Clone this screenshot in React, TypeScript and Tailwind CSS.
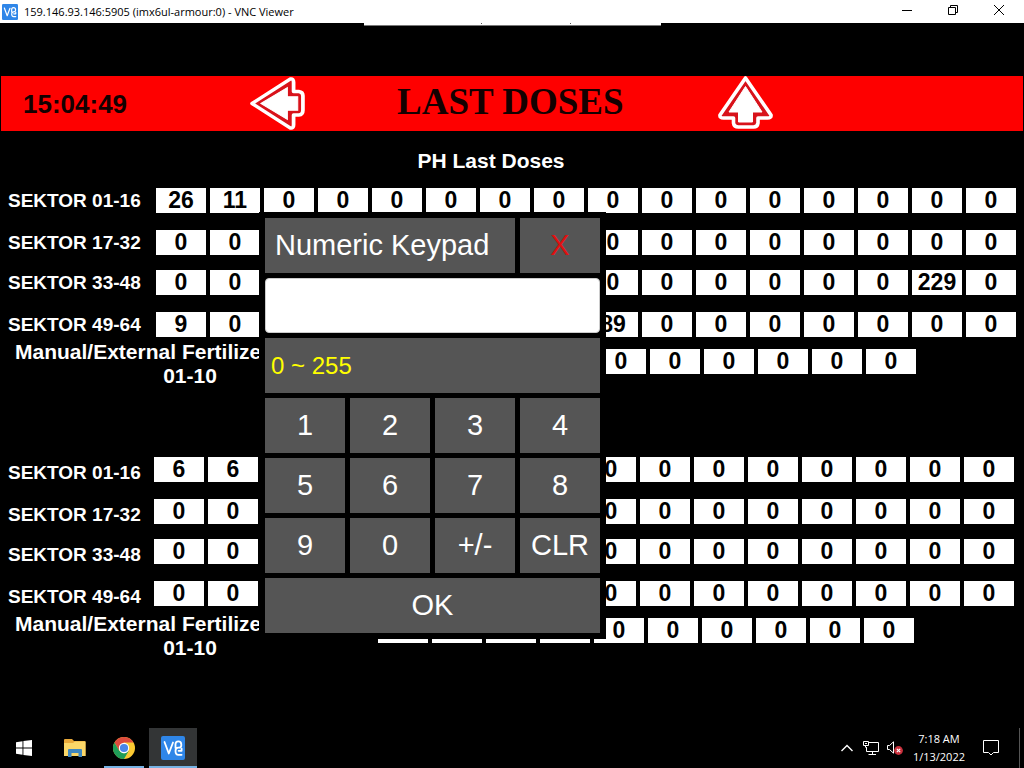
import React from "react";

type Row = { label: string; values: string[] };

const fill = (count: number, overrides: Record<number, string> = {}): string[] =>
  Array.from({ length: count }, (_, i) => overrides[i] ?? "0");

// Columns 3 to 8 carry no reading while the keypad is open over them.
const masked = (overrides: Record<number, string> = {}): string[] =>
  fill(16, { 2: "", 3: "", 4: "", 5: "", 6: "", 7: "", ...overrides });

const phRows: Row[] = [
  { label: "SEKTOR 01-16", values: fill(16, { 0: "26", 1: "11" }) },
  { label: "SEKTOR 17-32", values: masked() },
  { label: "SEKTOR 33-48", values: masked({ 14: "229" }) },
  { label: "SEKTOR 49-64", values: masked({ 0: "9", 8: "89" }) },
];

const lowerRows: Row[] = [
  { label: "SEKTOR 01-16", values: masked({ 0: "6", 1: "6" }) },
  { label: "SEKTOR 17-32", values: masked() },
  { label: "SEKTOR 33-48", values: masked() },
  { label: "SEKTOR 49-64", values: masked() },
];

const manualValues = fill(10, { 0: "", 1: "", 2: "", 3: "" });

function VncLogo({ className }: { className: string }) {
  return (
    <svg viewBox="0 0 24 24" className={className} aria-hidden="true">
      <rect width="24" height="24" rx="2" fill="#2f86e8" />
      <g fill="none" stroke="#fff" strokeWidth="1.8" strokeLinecap="round" strokeLinejoin="round">
        <path d="M3.5 6 L7.8 17.5 L12 6.5" />
        <path d="M14.5 12 V8.2 Q14.5 5.3 17.3 5.3 Q20.3 5.3 20.3 8.4 V9.2 Q20.3 11.7 17.8 11.7 H17 Q14.5 12 14.5 15 Q14.5 18.8 17.4 18.8 H20.6" />
        <path d="M17.6 14.8 H20.6 V12.6" />
      </g>
    </svg>
  );
}

function ArrowIcon({ className }: { className: string }) {
  return (
    <svg viewBox="0 0 55 53" preserveAspectRatio="none" className={className} aria-hidden="true">
      <path
        d="M27.5 2 L53 39 Q53.5 42 49.5 42 H40 V47 Q39.5 51 35.5 51 H20.5 Q16 51 15.5 47 V42 H5.5 Q1.5 42 2 39 Z"
        fill="#d8121a"
        stroke="#fff"
        strokeWidth="3.6"
        strokeLinejoin="round"
      />
      <path d="M27.5 10.5 L44 36 H34.5 V46 H20.5 V36 H11 Z" fill="#fff" stroke="#fff" strokeWidth="1" />
    </svg>
  );
}

function TitleBar() {
  return (
    <header className="flex h-[23px] shrink-0 items-center bg-white pr-0.5 pl-0.5 text-black">
      <VncLogo className="h-4 w-4" />
      <h1 className="flex-1 pl-1.5 font-['Open_Sans','Noto_Sans',sans-serif] text-[11px] leading-4">
        159.146.93.146:5905 (imx6ul-armour:0) - VNC Viewer
      </h1>
      <div className="flex h-full items-start">
        <button type="button" aria-label="Minimize" className="flex h-5 w-[46px] items-center justify-center">
          <svg viewBox="0 0 10 10" className="h-2.5 w-2.5" aria-hidden="true">
            <path d="M0 5.5 H10" stroke="#000" />
          </svg>
        </button>
        <button type="button" aria-label="Restore" className="flex h-5 w-[46px] items-center justify-center">
          <svg viewBox="0 0 10 10" className="h-2.5 w-2.5" fill="none" stroke="#000" aria-hidden="true">
            <path d="M0.5 2.5 H7.5 V9.5 H0.5 Z M2.5 2.5 V0.5 H9.5 V7.5 H7.5" />
          </svg>
        </button>
        <button type="button" aria-label="Close" className="flex h-5 w-[46px] items-center justify-center">
          <svg viewBox="0 0 10 10" className="h-2.5 w-2.5" stroke="#000" aria-hidden="true">
            <path d="M0 0 L10 10 M10 0 L0 10" />
          </svg>
        </button>
      </div>
    </header>
  );
}

function Banner() {
  return (
    <div className="mx-px grid h-[55px] grid-cols-[249fr_147fr_321fr_305fr] items-center bg-[#fe0000] text-[#140000]">
      <time className="pl-[22px] text-[26px] leading-8 font-bold">15:04:49</time>
      <button type="button" aria-label="Previous page" className="flex w-[55px] justify-center self-start">
        <ArrowIcon className="h-[55px] w-[53px] -rotate-90" />
      </button>
      <h2 className="pb-1 font-['Liberation_Serif',serif] text-[37px] leading-10 font-bold whitespace-nowrap">
        LAST DOSES
      </h2>
      <button type="button" aria-label="Up" className="flex w-[55px] self-start">
        <ArrowIcon className="h-[53px] w-[55px]" />
      </button>
    </div>
  );
}

const cellClass = "h-[25px] min-w-0 flex-1 bg-white p-0 text-center text-[23px] leading-[25px] text-black";

function DoseTable(props: {
  title: string;
  rows: Row[];
  className: string;
  labelClass: string;
  lastRowClass: string;
  manualClass: string;
}) {
  const { title, rows, className, labelClass, lastRowClass, manualClass } = props;
  const heights = ["h-[42px]", "h-10", "h-[42px]", lastRowClass];
  return (
    <table className={`block font-bold ${className}`} aria-label={title}>
      <tbody className="block">
        {rows.map((row, i) => (
          <tr key={row.label} className={`flex items-start gap-1 ${heights[i]}`}>
            <th scope="row" className={`shrink-0 text-left text-[19px] leading-[25px] whitespace-nowrap ${labelClass}`}>
              {row.label}
            </th>
            {row.values.map((value, j) => (
              <td key={j} className={cellClass}>
                {value}
              </td>
            ))}
          </tr>
        ))}
        <tr className={`flex h-12 items-start gap-1 pr-[100px] ${manualClass}`}>
          <th scope="row" className="shrink-0 pl-[15px] text-left text-[21px] leading-6 whitespace-nowrap">
            <span className="block">Manual/External Fertilize</span>
            <span className="block w-[350px] text-center">01-10</span>
          </th>
          {manualValues.map((value, j) => (
            <td key={j} className={cellClass}>
              {value}
            </td>
          ))}
        </tr>
      </tbody>
    </table>
  );
}

const keys = ["1", "2", "3", "4", "5", "6", "7", "8", "9", "0", "+/-", "CLR"];

function Keypad() {
  return (
    <div
      role="dialog"
      aria-label="Numeric Keypad"
      className="absolute top-[189px] left-[259px] grid w-[347px] auto-rows-[55px] grid-cols-4 gap-[5px] bg-black p-1.5 text-[29px] leading-none text-white"
    >
      <h3 className="col-span-3 flex items-center bg-[#555] pl-2.5">Numeric Keypad</h3>
      <button type="button" aria-label="Close keypad" className="bg-[#555] text-[#e01010]">
        X
      </button>
      <input
        aria-label="Value"
        type="text"
        className="col-span-4 rounded-sm border border-[#ccc] bg-white px-2 text-black outline-none"
      />
      <p className="col-span-4 flex items-center bg-[#555] pl-1.5 text-[24px] text-[#ffff00]">0 ~ 255</p>
      {keys.map((key) => (
        <button key={key} type="button" className="bg-[#555]">
          {key}
        </button>
      ))}
      <button type="button" className="col-span-4 bg-[#555]">
        OK
      </button>
    </div>
  );
}

function Taskbar() {
  return (
    <footer className="flex h-10 shrink-0 items-center bg-black text-white">
      <button type="button" aria-label="Start" className="flex h-10 w-12 items-center justify-center">
        <svg viewBox="0 0 16 16" className="h-4 w-4" fill="#fff" aria-hidden="true">
          <path d="M0 2.2 L6.5 1.2 V7.5 H0 Z M7.4 1.1 L16 0 V7.5 H7.4 Z M0 8.4 H6.5 V14.8 L0 13.8 Z M7.4 8.4 H16 V16 L7.4 14.9 Z" />
        </svg>
      </button>
      <button type="button" aria-label="File Explorer" className="ml-0.5 flex h-10 w-[50px] items-center justify-center">
        <svg viewBox="0 0 22 18" className="h-[18px] w-[22px]" aria-hidden="true">
          <path d="M0 1 Q0 0 1 0 H8 L10 2 H20.5 Q21.5 2 21.5 3 V17 H0 Z" fill="#e9a93a" />
          <path d="M0 4 H9 L11 2.5 H21.5 V17 H0 Z" fill="#fbd768" />
          <path d="M4 18 V11 Q4 10 5 10 H17 Q18 10 18 11 V18 H14.5 V14 H7.5 V18 Z" fill="#3f87bf" />
        </svg>
      </button>
      <button
        type="button"
        aria-label="Chrome"
        className="ml-1 flex h-10 w-10 items-center justify-center border-b-2 border-[#76b2e4]"
      >
        <svg viewBox="0 0 22 22" className="mt-0.5 h-[22px] w-[22px]" aria-hidden="true">
          <circle cx="11" cy="11" r="11" fill="#fbc932" />
          <path d="M1.47 5.5 A11 11 0 0 1 20.53 5.5 H11 L6.2 13.8 Z" fill="#dd4b3e" />
          <path d="M1.47 5.5 A11 11 0 0 0 11 22 L15.8 13.8 L11 16.5 L6.2 13.8 Z" fill="#1f9d58" />
          <circle cx="11" cy="11" r="5.2" fill="#fff" />
          <circle cx="11" cy="11" r="4.1" fill="#4a86e8" />
        </svg>
      </button>
      <button
        type="button"
        aria-label="VNC Viewer"
        className="ml-[5px] flex h-10 w-12 items-center justify-center border-b-2 border-[#76b2e4] bg-[#333536]"
      >
        <VncLogo className="mt-0.5 h-6 w-6" />
      </button>
      <div className="ml-auto flex h-10 items-center">
        <button type="button" aria-label="Show hidden icons" className="mr-2.5">
          <svg viewBox="0 0 12 8" className="h-2 w-3" fill="none" stroke="#fff" strokeWidth="1.4" aria-hidden="true">
            <path d="M0.5 7 L6 1.5 L11.5 7" />
          </svg>
        </button>
        <button type="button" aria-label="Network" className="mr-2">
          <svg viewBox="0 0 16 14" className="h-3.5 w-4" fill="none" stroke="#fff" aria-hidden="true">
            <path d="M6 1.5 H15.5 V10.5 H3.5 V6 M9.5 10.5 V13 M5.5 13.5 H13 M0.5 0.5 H5.5 V4.5 H0.5 Z M2.5 4.5 V6.5 M2 2.5 H4" />
          </svg>
        </button>
        <button type="button" aria-label="Volume muted" className="mr-2.5">
          <svg viewBox="0 0 16 14" className="h-3.5 w-4" aria-hidden="true">
            <path d="M0.5 4.5 H2.5 L6.5 0.8 V12.2 L2.5 8.5 H0.5 Z" fill="none" stroke="#fff" />
            <circle cx="11.5" cy="9.5" r="4.4" fill="#c9303c" />
            <path d="M9.8 7.8 L13.2 11.2 M13.2 7.8 L9.8 11.2" stroke="#fff" strokeWidth="1.1" />
          </svg>
        </button>
        <time className="text-center font-['Open_Sans','Noto_Sans',sans-serif] text-[11px] leading-[18px]">
          <span className="block">7:18 AM</span>
          <span className="block">1/13/2022</span>
        </time>
        <button type="button" aria-label="Notifications" className="mr-5 ml-[18px]">
          <svg viewBox="0 0 16 16" className="h-4 w-4" fill="none" stroke="#fff" aria-hidden="true">
            <path d="M0.5 0.5 H15.5 V12.5 H10.5 L8 15 L5.5 12.5 H0.5 Z" />
          </svg>
        </button>
        <div className="mr-1 h-10 w-px bg-[#555]" />
      </div>
    </footer>
  );
}

export default function App() {
  return (
    <div className="flex min-h-screen flex-col overflow-hidden bg-black font-['Liberation_Sans',Arial,sans-serif]">
      <TitleBar />
      <main className="relative flex-1 pt-[53px] text-white">
        <div className="absolute inset-x-0 top-0 flex justify-center">
          <div className="flex h-[3px] w-[297px] border-b border-[#777] bg-white">
            <span className="ml-[117px] h-px w-px bg-[#555]" />
            <span className="ml-[88px] h-px w-px bg-[#555]" />
          </div>
        </div>
        <Banner />
        <h2 className="mt-[18px] mb-[15px] pr-[42px] text-center text-[21px] leading-6 font-bold">PH Last Doses</h2>
        <DoseTable
          title="PH Last Doses"
          rows={phRows}
          className="pr-2"
          labelClass="w-[152px] pl-2"
          lastRowClass="h-7"
          manualClass="[&>td]:mt-[9px] [&>th]:w-[376px]"
        />
        <DoseTable
          title="Last Doses"
          rows={lowerRows}
          className="mt-[69px] pr-2.5"
          labelClass="w-[150px] pt-[3px] pl-2"
          lastRowClass="h-[31px]"
          manualClass="[&>td]:mt-1.5 [&>th]:w-[374px]"
        />
        <Keypad />
      </main>
      <Taskbar />
    </div>
  );
}
